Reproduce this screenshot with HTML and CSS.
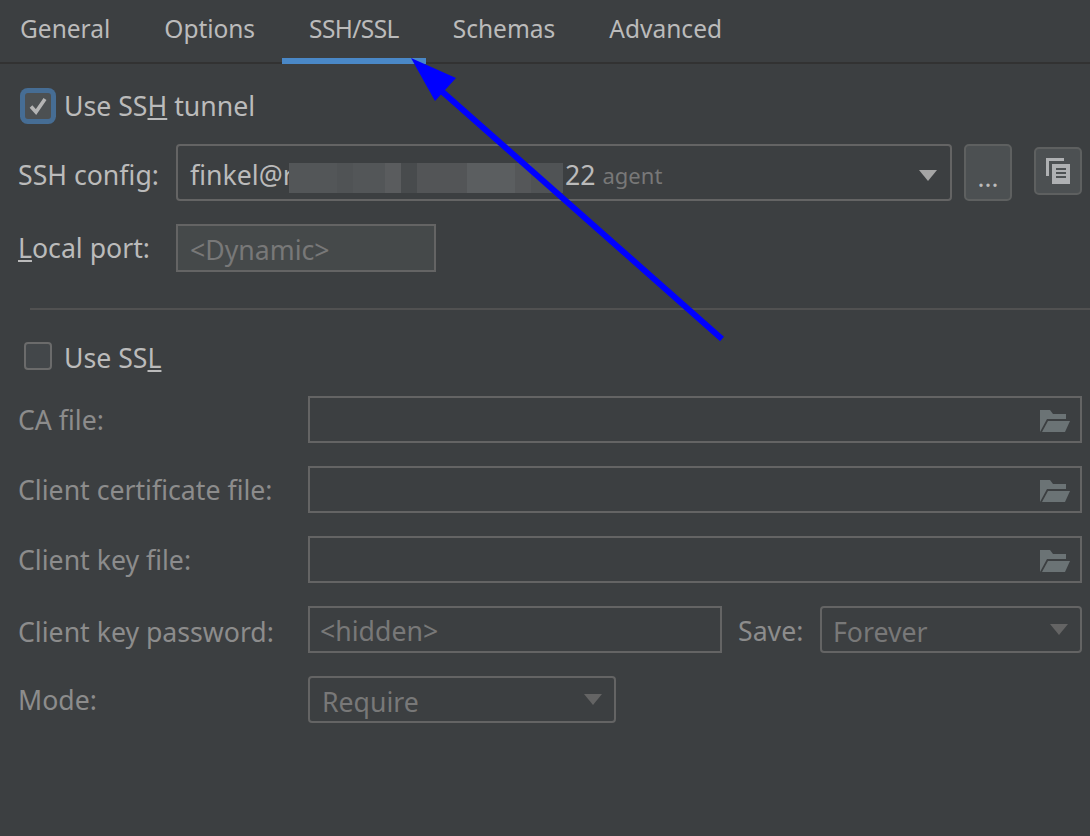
FILE: index.html
```html
<!DOCTYPE html>
<html lang="en">
<head>
<meta charset="utf-8">
<title>SSH/SSL</title>
<link rel="stylesheet" href="styles.css">
</head>
<body>
<div class="tabs">
  <div class="tab">General</div>
  <div class="tab tight">Options</div>
  <div class="tab active">SSH/SSL</div>
  <div class="tab">Schemas</div>
  <div class="tab">Advanced</div>
</div>
<main class="panel">
  <div class="check-row tunnel">
    <span class="check focused"><svg viewBox="0 0 26 26" width="26" height="26"><path d="M6 13.5 L11 19 L20 6" fill="none" stroke="#b4b4b4" stroke-width="3.6"/></svg></span>
    <span class="label-strong">Use SS<u>H</u> tunnel</span>
  </div>
  <div class="ssh-row">
    <label class="label-strong ssh-label">SSH config:</label>
    <div class="combo ssh-combo">
      <span class="value clipped">finkel@r</span><span class="blur"><i class="b1"></i><i class="b2"></i><i class="b3"></i><i class="b4"></i><i class="b5"></i><i class="b6"></i><i class="b7"></i><i class="b8"></i><i class="b9"></i></span><span class="value port-suffix">22</span><span class="agent">agent</span>
      <span class="caret"></span>
    </div>
    <button class="btn dots">...</button>
    <button class="btn copy"><svg viewBox="0 0 24 26" width="24" height="26"><path d="M0 0H18V3H3V18H0Z" fill="#afb1b3"/><rect x="6" y="6" width="18" height="20" fill="#afb1b3"/><path d="M10 11H20M10 15H20M10 19H20" stroke="#4e5254" stroke-width="2"/></svg></button>
  </div>
  <div class="port-row">
    <label class="label-strong port-label"><u>L</u>ocal port:</label>
    <div class="port-field">&lt;Dynamic&gt;</div>
  </div>
  <hr class="sep">
  <div class="check-row ssl">
    <span class="check"></span>
    <span class="label-strong">Use SS<u>L</u></span>
  </div>
  <div class="form">
    <label>CA file:</label>
    <div class="field file"><svg class="folder" viewBox="0 0 30 22" width="30" height="22"><path d="M0 0H10L13 4H26V9H7L0 22Z" fill="#6b7375"/><path d="M8 11H30L25 22H2Z" fill="#6b7375"/></svg></div>
    <label>Client certificate file:</label>
    <div class="field file"><svg class="folder" viewBox="0 0 30 22" width="30" height="22"><path d="M0 0H10L13 4H26V9H7L0 22Z" fill="#6b7375"/><path d="M8 11H30L25 22H2Z" fill="#6b7375"/></svg></div>
    <label>Client key file:</label>
    <div class="field file"><svg class="folder" viewBox="0 0 30 22" width="30" height="22"><path d="M0 0H10L13 4H26V9H7L0 22Z" fill="#6b7375"/><path d="M8 11H30L25 22H2Z" fill="#6b7375"/></svg></div>
    <label class="pass-label">Client key password:</label>
    <div class="pass-row">
      <div class="field pass">&lt;hidden&gt;</div>
      <label class="save-label">Save:</label>
      <div class="combo disabled save">Forever<span class="caret"></span></div>
    </div>
    <label>Mode:</label>
    <div class="combo disabled mode">Require<span class="caret"></span></div>
  </div>
</main>
<svg class="arrow" width="1090" height="836" viewBox="0 0 1090 836" aria-hidden="true">
  <path d="M722 339 L437 87" stroke="#0000ff" stroke-width="6" fill="none"/>
  <path d="M411 58 L456 78 L435 101 Z" fill="#0000ff"/>
</svg>
</body>
</html>
```
FILE: styles.css
```css
* { box-sizing: border-box; }
html, body { margin: 0; height: 100%; overflow: hidden; }
body {
  background: #3c3f41;
  color: #bbbbbb;
  font-family: "Noto Sans", sans-serif;
  font-size: 26.67px;
  line-height: 34px;
  width: 1090px;
  height: 836px;
  position: relative;
}
.tabs {
  display: flex;
  height: 64px;
  margin-left: -7px;
  border-bottom: 2px solid #323232;
  width: 1097px;
}
.tab {
  padding: 12px 27px 0;
  height: 64px;
  font-size: 24.5px;
  color: #bbbbbb;
}
.tab.tight { letter-spacing: -0.05px; }
.tab.active { border-bottom: 6px solid #4a88c7; letter-spacing: -0.6px; }
.panel { padding: 0 8px 0 18px; }
.check-row { display: flex; align-items: center; }
.check {
  width: 28px;
  height: 28px;
  border: 2px solid #6b6b6b;
  border-radius: 4px;
  background: #43474a;
  display: flex;
  align-items: center;
  justify-content: center;
  margin-right: 12px;
  margin-left: 6px;
  flex: none;
}
.check.focused {
  background: #4c5052;
  width: 26px;
  height: 26px;
  box-shadow: 0 0 0 5px #466d94;
  border: 0;
  border-radius: 3px;
  margin-left: 7px;
  margin-right: 13px;
}
.tunnel { margin-top: 25px; height: 34px; }
.label-strong { color: #bbbbbb; }
.ssh-row { display: flex; align-items: center; margin-top: 21px; height: 57px; }
.ssh-label { width: 158px; flex: none; padding-top: 4px; }
.combo {
  border: 2px solid #646464;
  border-radius: 4px;
  display: flex;
  align-items: center;
  position: relative;
  padding-left: 12px;
}
.ssh-combo { width: 776px; height: 57px; flex: none; }
.value { color: #bbbbbb; padding-top: 4px; }
.clipped { width: 99px; white-space: nowrap; flex: none; }
.port-suffix { margin-left: 2px; }
.blur { display: flex; height: 30px; flex: none; margin-top: 10px; }
.blur i { display: block; height: 30px; }
.b1 { width: 48px; background: #535658; }
.b2 { width: 16px; background: #505355; }
.b3 { width: 32px; background: #535658; }
.b4 { width: 16px; background: #5a5c5e; }
.b5 { width: 16px; background: #484b4d; }
.b6 { width: 50px; background: #535557; }
.b7 { width: 48px; background: #5b5e60; }
.b8 { width: 16px; background: #555759; }
.b9 { width: 32px; background: #505355; }
.agent { color: #787878; font-size: 22px; margin-left: 7px; padding-top: 4px; }
.caret {
  position: absolute;
  right: 13px;
  top: 24px;
  width: 0;
  height: 0;
  border-left: 9px solid transparent;
  border-right: 9px solid transparent;
  border-top: 11px solid #a5a5a5;
}
.btn {
  background: #4c5052;
  border: 2px solid #5e6060;
  border-radius: 5px;
  color: #bbbbbb;
  font: inherit;
  padding: 0;
  display: flex;
  align-items: center;
  justify-content: center;
  flex: none;
}
.dots { width: 48px; height: 57px; margin-left: 12px; font-size: 26px; padding-top: 8px; }
.copy { width: 48px; height: 48px; margin-left: 22px; margin-top: -4px; }
.port-row { display: flex; align-items: center; margin-top: 23px; height: 48px; }
.port-label { width: 158px; flex: none; }
.port-field {
  width: 260px;
  height: 48px;
  border: 2px solid #646464;
  background: #45494a;
  color: #787878;
  padding: 7px 12px 0;
  flex: none;
}
.sep { border: 0; height: 2px; background: #515151; margin: 36px 0 0 12px; width: 1060px; }
.ssl { margin-top: 29px; height: 34px; }
.ssl .label-strong { padding-top: 4px; }
.form {
  display: grid;
  grid-template-columns: 290px 774px;
  grid-auto-rows: 47px;
  row-gap: 23px;
  margin-top: 23px;
  color: #8c8c8c;
  align-items: start;
}
.form label { color: #8c8c8c; display: block; line-height: 47px; white-space: nowrap; }
.form .pass-label { padding-top: 2px; }
.field {
  height: 47px;
  border: 2px solid #646464;
  color: #787878;
  padding: 6px 10px 0;
}
.file { position: relative; }
.folder { position: absolute; right: 10px; top: 12px; }
.pass-row { display: flex; align-items: center; height: 47px; }
.pass { width: 414px; flex: none; }
.form .save-label { margin-left: 16px; width: 82px; color: #8c8c8c; flex: none; padding-top: 2px; line-height: 45px; }
.disabled { color: #787878; height: 47px; padding-top: 4px; }
.save { width: 262px; flex: none; padding-left: 11px; }
.mode { width: 308px; }
.disabled .caret { border-top-color: #646464; top: 16px; right: 12px; }
.arrow { position: absolute; left: 0; top: 0; pointer-events: none; }
```
